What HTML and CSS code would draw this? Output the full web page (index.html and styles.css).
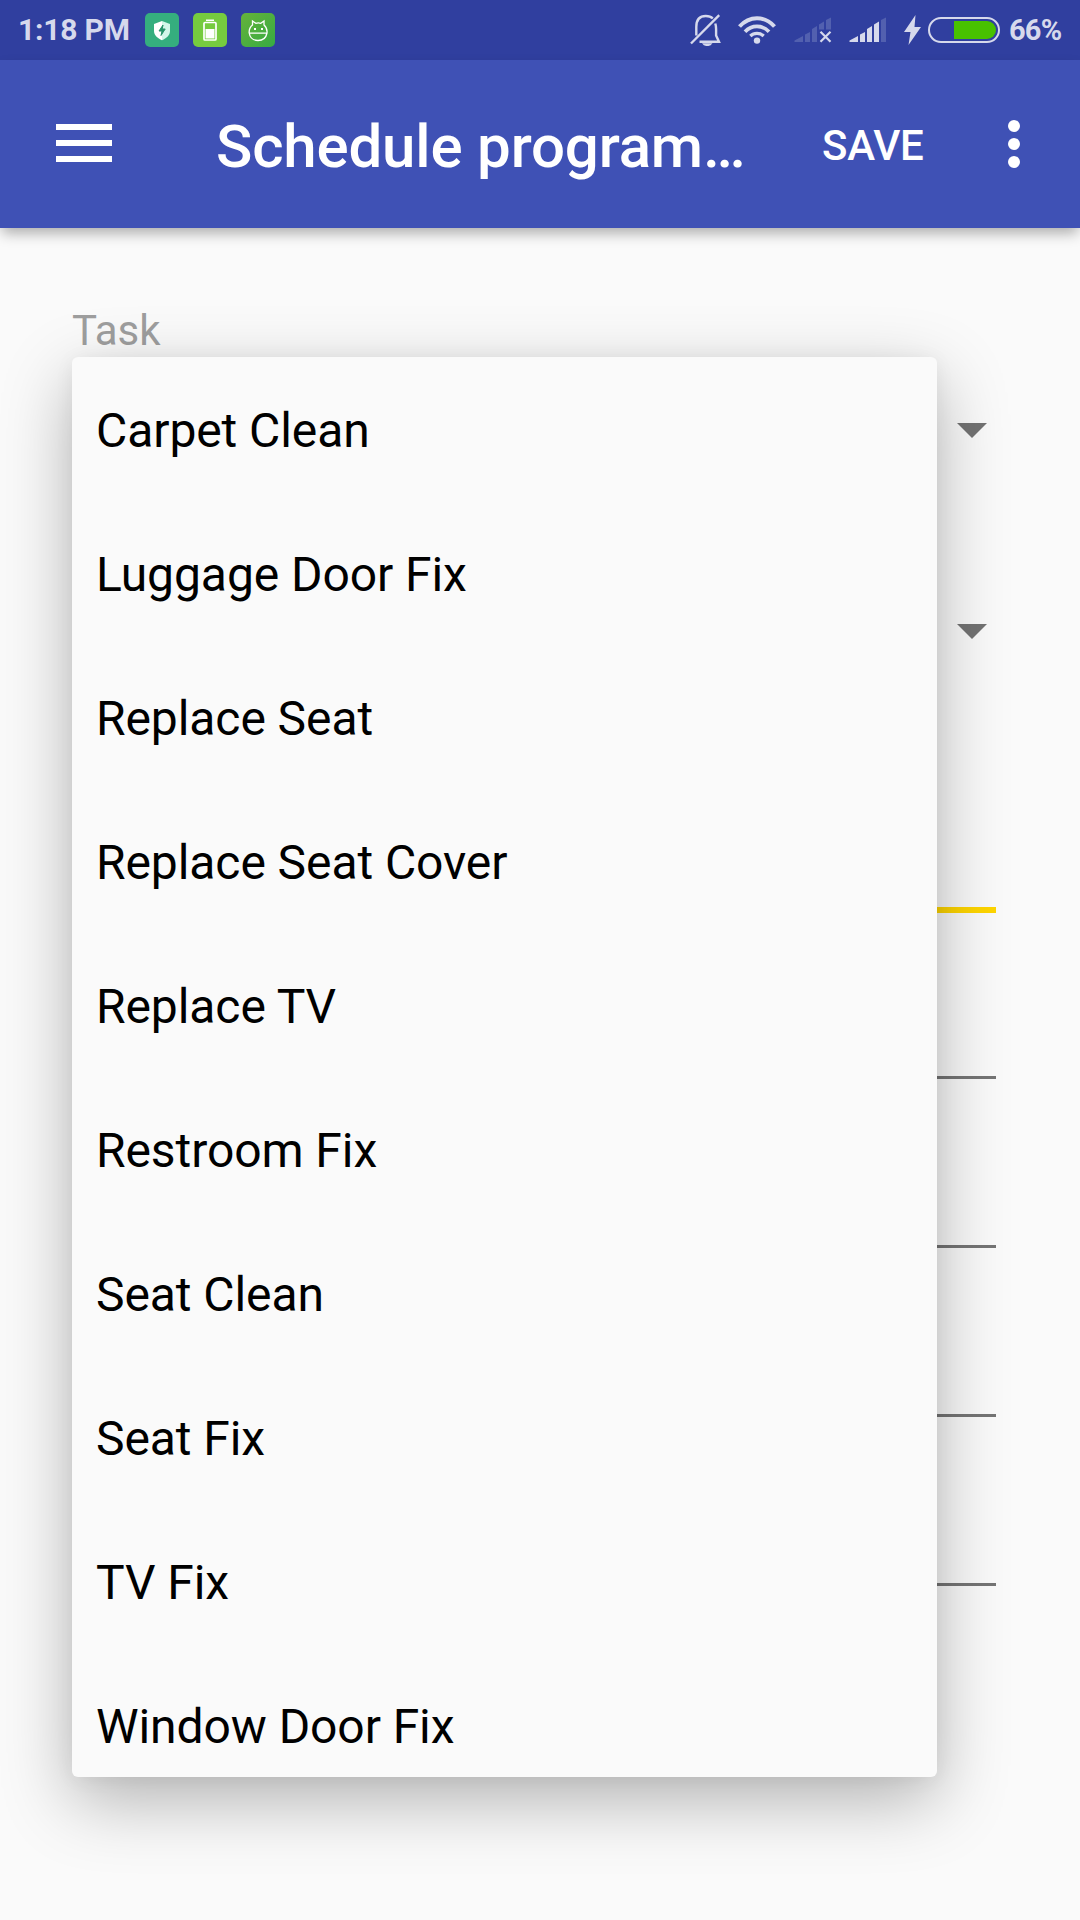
FILE: index.html
```html
<!DOCTYPE html>
<html lang="en">
<head>
<meta charset="utf-8">
<title>Schedule program</title>
<link rel="stylesheet" href="styles.css">
</head>
<body>
<div class="screen">
  <div class="status-bar">
    <span class="clock">1:18 PM</span>
    <div class="notifications">
      <svg class="badge" viewBox="0 0 34 34">
        <rect width="34" height="34" rx="5" fill="#35ae7e"/>
        <path d="M17 8l8 3v7c0 4.500-3.500 7-8 9.300z" fill="#d3f7e9"/>
        <path d="M17 8l-8 3v7c0 4.500 3.500 7 8 9.300z" fill="#fff"/>
        <path d="M18 12l-4 6h3l-1 4.500 4.200-6.500h-3z" fill="#26936a" stroke="#26936a" stroke-width="1"/>
      </svg>
      <svg class="badge" viewBox="0 0 34 34">
        <rect width="34" height="34" rx="5" fill="#76cb3f"/>
        <path d="M13 6.500h8v1.500h-8z" fill="#fff"/>
        <rect x="11" y="9.500" width="12" height="17.500" rx="1" fill="none" stroke="#fff" stroke-width="1.700"/>
        <path d="M12.500 16h9v9.500h-9z" fill="#fff"/>
      </svg>
      <svg class="badge" viewBox="0 0 34 34">
        <defs><linearGradient id="leaf" x1="0" y1="0" x2="1" y2="1"><stop offset="0" stop-color="#66b23b"/><stop offset="1" stop-color="#36ab42"/></linearGradient></defs>
        <rect width="34" height="34" rx="5" fill="url(#leaf)"/>
        <path d="M11.500 12V8l3.300 2.300q2.500-.7 5 0L23 8v4q3.500 3 3 8c-1 5-4.500 7.500-9 7.500S9 25 8.200 20q-.4-5 3.300-8zM8.200 20.200H26" fill="none" stroke="#fff" stroke-width="1.300"/>
        <path d="M13 15h2v2h-2zM20 15h2v2h-2z" fill="#fff"/>
      </svg>
    </div>
    <div class="indicators">
      <svg class="bell" viewBox="0 0 32 32" fill="none" stroke="#d6d9ec" stroke-width="2.400">
        <path d="M6.300 21.500V13c0-7.500 3-11 9.500-11 3.200 0 5.400.9 7 2.500M25.300 9.500q.8 2.500.8 5.500v6.500l2.900 6.300H9.500"/>
        <path d="M1 29.500L29.200 1.200"/>
        <path d="M12 29.300h10.500q-2 3-5.200 2.700-3.300.3-5.300-2.700z" fill="#d6d9ec" stroke="none"/>
      </svg>
      <svg class="wifi" viewBox="0 0 40 28" fill="none" stroke="#d6d9ec" stroke-width="4">
        <path d="M2.500 10.500q7.500-8.300 17.500-8.300t17.500 8.300"/>
        <path d="M8 15.700q5-5.300 12-5.300t12 5.300" stroke-width="3.700"/>
        <path d="M13.300 20q2.700-2.600 6.700-2.600t6.700 2.600" stroke-width="3.200"/>
        <circle cx="20" cy="24.600" r="3.200" fill="#d6d9ec" stroke="none"/>
      </svg>
      <svg class="signal" viewBox="0 0 38 26">
        <path d="M.5 23.500L9 19v6H.500zM11 17.500l5-2.500v10h-5zM18 12l5-3v16h-5zM25 7.500l5-3v8h-5zM32 3l5-2.500v12h-5z" fill="#5260af"/>
        <path d="M26.500 14.700l10 10M36.500 14.700l-10 10" stroke="#d6d9ec" stroke-width="2.200"/>
      </svg>
      <svg class="signal" viewBox="0 0 38 26">
        <path d="M.5 23.500L9 19v6H.500zM11 17.500l5-2.500v10h-5zM18 12l5-3v16h-5zM25 7.500l5-3v20.500h-5z" fill="#d6d9ec"/>
        <path d="M32 3l5-2.500V25h-5z" fill="#5260af"/>
      </svg>
      <svg class="bolt" viewBox="0 0 17 30"><path d="M11.500 0L0 17h6.500L4.500 30 17 12h-6.500z" fill="#d6d9ec"/></svg>
      <svg class="battery" viewBox="0 0 72 26">
        <rect x="1" y="1" width="70" height="24" rx="12" fill="none" stroke="#d6d9ec" stroke-width="2"/>
        <path d="M26 4h33a9 9 0 0 1 0 18H26z" fill="#48c100"/>
      </svg>
      <span class="percent">66%</span>
    </div>
  </div>

  <header class="app-bar">
    <svg class="menu-icon" viewBox="0 0 56 38" fill="#fff"><path d="M0 0h56v6H0zM0 16h56v6H0zM0 32h56v6H0z"/></svg>
    <h1 class="title">Schedule program…</h1>
    <span class="save">SAVE</span>
    <svg class="more-icon" viewBox="0 0 12 48" fill="#fff"><circle cx="6" cy="6" r="6"/><circle cx="6" cy="24" r="6"/><circle cx="6" cy="42" r="6"/></svg>
  </header>

  <main class="form">
    <label class="label">Task</label>
    <div class="spinner first"><svg class="arrow" viewBox="0 0 30 15"><path d="M0 0h30L15 15z"/></svg></div>
    <div class="spinner second"><svg class="arrow" viewBox="0 0 30 15"><path d="M0 0h30L15 15z"/></svg></div>
    <div class="field focused"></div>
    <div class="field"></div>
    <div class="field"></div>
    <div class="field"></div>
    <div class="field"></div>
  </main>

  <ul class="dropdown">
    <li>Carpet Clean</li>
    <li>Luggage Door Fix</li>
    <li>Replace Seat</li>
    <li>Replace Seat Cover</li>
    <li>Replace TV</li>
    <li>Restroom Fix</li>
    <li>Seat Clean</li>
    <li>Seat Fix</li>
    <li>TV Fix</li>
    <li>Window Door Fix</li>
  </ul>
</div>
</body>
</html>
```
FILE: styles.css
```css
* { box-sizing: border-box; }

body {
  margin: 0;
  background: #fafafa;
  font-family: Roboto, "Liberation Sans", sans-serif;
}

svg { display: block; flex: none; }

.screen {
  position: relative;
  width: 1080px;
  height: 1920px;
  overflow: hidden;
  background: #fafafa;
}

.status-bar {
  display: flex;
  align-items: center;
  height: 60px;
  padding: 0 18px;
  background: #303f9f;
  color: #d6d9ec;
  font-size: 30px;
  font-weight: 700;
  line-height: 60px;
}

.clock { width: 127px; white-space: nowrap; letter-spacing: -0.2px; }

.notifications { display: flex; gap: 14px; }

.badge { width: 34px; height: 34px; }

.indicators {
  display: flex;
  align-items: center;
  margin-left: auto;
}

.bell { width: 32px; height: 32px; margin-right: 15px; }
.wifi { width: 40px; height: 28px; margin-right: 17px; }
.signal { width: 38px; height: 26px; margin-right: 17px; }
.bolt { width: 17px; height: 30px; margin-right: 7px; }
.battery { width: 72px; height: 26px; margin-right: 9px; }
.percent { width: 53px; font-size: 29px; white-space: nowrap; letter-spacing: -0.8px; }

.app-bar {
  display: flex;
  align-items: center;
  height: 168px;
  padding: 0 60px 0 56px;
  background: #3f51b5;
  color: #fff;
  box-shadow: 0 7px 13px -2px rgba(0, 0, 0, 0.32);
}

.menu-icon { width: 56px; height: 38px; margin-top: -2px; }

.title {
  width: 606px;
  margin: 4px 0 0 104px;
  font-size: 60px;
  font-weight: 500;
  letter-spacing: -0.17px;
  white-space: nowrap;
}

.save {
  padding-top: 2px;
  font-size: 42px;
  font-weight: 500;
  letter-spacing: -0.2px;
}

.more-icon { width: 12px; height: 48px; margin-left: auto; }

.form {
  display: flex;
  flex-direction: column;
  padding: 78px 84px 0 72px;
}

.label {
  height: 49px;
  color: #9e9e9e;
  font-size: 42px;
  line-height: 50px;
}

.spinner {
  display: flex;
  justify-content: flex-end;
  padding-right: 9px;
}

.spinner.first { height: 201px; padding-top: 68px; }
.spinner.second { height: 182px; padding-top: 68px; }

.arrow { width: 30px; height: 15px; fill: #737373; }

.field { height: 169px; border-bottom: 3px solid #757575; }

.field.focused { height: 175px; border-bottom: 6px solid #ffd600; }

.field.focused + .field { height: 166px; }

.dropdown {
  position: absolute;
  left: 72px;
  top: 357px;
  width: 865px;
  height: 1420px;
  margin: 0;
  padding: 2px 24px 0;
  overflow: hidden;
  list-style: none;
  border-radius: 6px;
  background: #fafafa;
  box-shadow: 0 23px 70px rgba(0, 0, 0, 0.29), 0 2px 20px rgba(0, 0, 0, 0.05);
}

.dropdown li {
  height: 144px;
  color: #000;
  font-size: 48px;
  letter-spacing: -0.08px;
  line-height: 144px;
  white-space: nowrap;
}
```
